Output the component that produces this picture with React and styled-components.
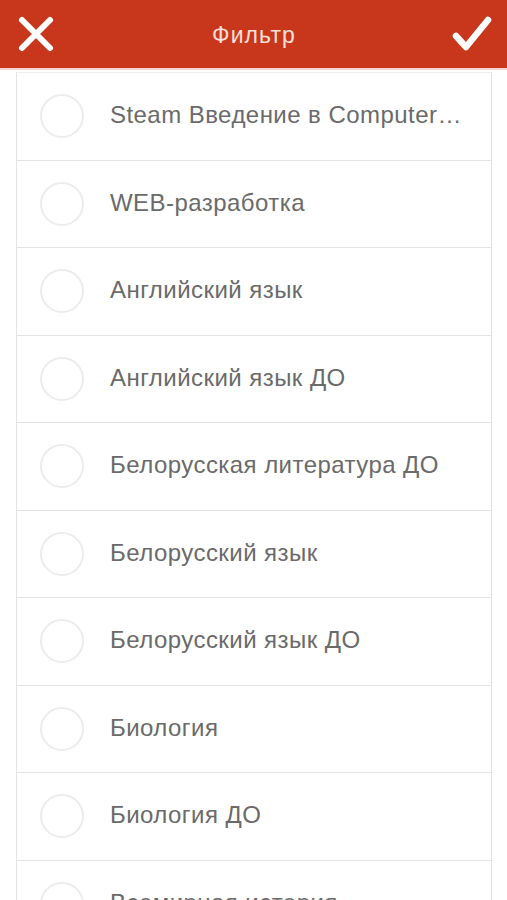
import React from 'react';
import styled, { createGlobalStyle } from 'styled-components';

const GlobalStyle = createGlobalStyle`
  html, body {
    margin: 0;
    padding: 0;
    background: #ffffff;
  }
  body {
    font-family: "Liberation Sans", Arial, sans-serif;
    overflow: hidden;
  }
`

const Screen = styled.div`
  width: 507px;
  height: 900px;
  overflow: hidden;
  background: #fff;
`

const Header = styled.header`
  height: 68px;
  background: #c8361c;
  border-bottom: 2px solid #f6d4cf;
  display: flex;
  align-items: center;
  justify-content: space-between;
  padding: 0 14px 0 15px;
`

const IconButton = styled.button`
  width: 42px;
  height: 42px;
  padding: 0;
  border: 0;
  background: transparent;
  display: flex;
  align-items: center;
  justify-content: center;
`

const Title = styled.h1`
  margin: 2px 0 0;
  font-size: 23px;
  font-weight: normal;
  color: #f7e0da;
  letter-spacing: 1.1px;
`

const List = styled.ul`
  list-style: none;
  margin: 2px 15px 0 16px;
  padding: 0;
  border-left: 1px solid #e3e3e3;
  border-right: 1px solid #e3e3e3;
`

const Row = styled.li`
  height: 86.5px;
  border-top: 1px solid #e3e3e3;
  display: flex;
  align-items: center;
  padding: 0 26px 0 23px;

  &:first-child {
    border-top: 1px solid #eeeeee;
  }
`

const Radio = styled.span`
  flex: none;
  width: 40px;
  height: 40px;
  border-radius: 50%;
  border: 2px solid ${p => (p.checked ? '#c8361c' : '#ececec')};
  margin-right: 26px;
`

const Label = styled.span`
  font-size: 24px;
  letter-spacing: 0.45px;
  color: #6a6a6a;
  white-space: nowrap;
  overflow: hidden;
  text-overflow: ellipsis;
  min-width: 0;
  padding-bottom: 2px;
`

const subjects = [
  'Steam Введение в Computer Science',
  'WEB-разработка',
  'Английский язык',
  'Английский язык ДО',
  'Белорусская литература ДО',
  'Белорусский язык',
  'Белорусский язык ДО',
  'Биология',
  'Биология ДО',
  'Всемирная история',
  'Всемирная история ДО',
];

const CloseIcon = () => (
  <svg width="38" height="38" viewBox="0 0 38 38">
    <path d="M5 5 L33 33 M33 5 L5 33" stroke="#fff" strokeWidth="6" strokeLinecap="round" />
  </svg>
);

const CheckIcon = () => (
  <svg width="42" height="38" viewBox="0 0 42 38">
    <path d="M5 21 L15 32 L37 5" fill="none" stroke="#fff" strokeWidth="6.5" strokeLinecap="round" strokeLinejoin="round" />
  </svg>
);

const App = () => (
  <Screen>
    <GlobalStyle />
    <Header>
      <IconButton aria-label="Закрыть"><CloseIcon /></IconButton>
      <Title>Фильтр</Title>
      <IconButton aria-label="Применить"><CheckIcon /></IconButton>
    </Header>
    <List>
      {subjects.map((name, index) => (
        <Row key={index}>
          <Radio />
          <Label>{name}</Label>
        </Row>
      ))}
    </List>
  </Screen>
);

export default App;
